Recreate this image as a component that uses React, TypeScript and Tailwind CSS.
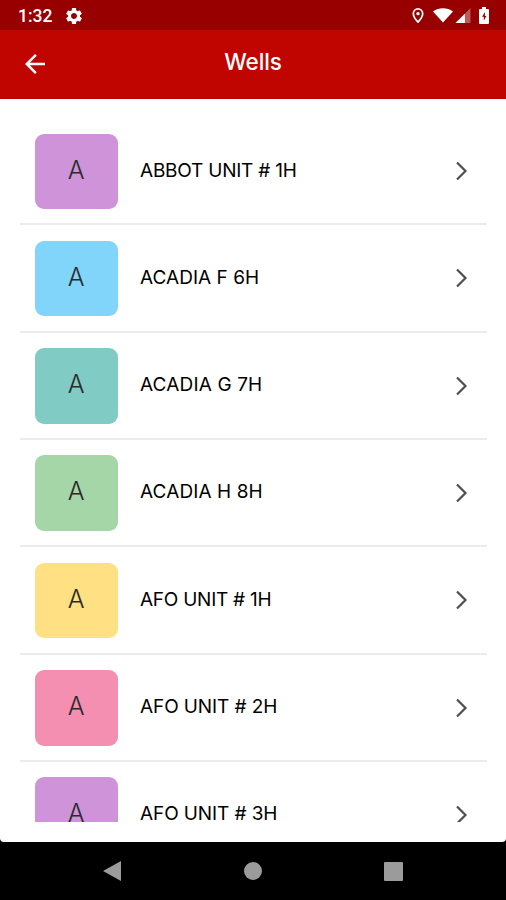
import { MdArrowBack, MdSettings } from "react-icons/md";

const wells = [
  { name: "ABBOT UNIT # 1H", color: "bg-[#ce93d8]", tracking: "tracking-[-0.22px]" },
  { name: "ACADIA F 6H", color: "bg-[#81d4fa]", tracking: "tracking-[0.03px]" },
  { name: "ACADIA G 7H", color: "bg-[#80cbc4]", tracking: "tracking-[0.15px]" },
  { name: "ACADIA H 8H", color: "bg-[#a5d6a7]", tracking: "tracking-[0.1px]" },
  { name: "AFO UNIT # 1H", color: "bg-[#ffe082]", tracking: "tracking-[-0.25px]" },
  { name: "AFO UNIT # 2H", color: "bg-[#f48fb1]", tracking: "tracking-[-0.1px]" },
  { name: "AFO UNIT # 3H", color: "bg-[#ce93d8]", tracking: "tracking-[-0.1px]" },
];

function StatusBar() {
  return (
    <div className="flex h-[30px] shrink-0 items-center bg-[#980000] pr-[17px] pl-[18px] text-white">
      <span className="w-[35px] pt-[3px] font-[Roboto,sans-serif] text-[17.5px] leading-none font-medium">
        1:32
      </span>
      <MdSettings className="mt-px ml-[11px] size-[20px]" />
      <svg className="mt-px ml-auto h-[15px] w-[12px]" viewBox="0 0 12 16">
        <path
          d="M6 1a5 5 0 0 0-5 5c0 3.500 5 9 5 9s5-5.500 5-9a5 5 0 0 0-5-5Z"
          fill="none"
          stroke="currentColor"
          strokeWidth="1.800"
        />
        <circle cx="6" cy="6" r="1.800" fill="currentColor" />
      </svg>
      <svg className="ml-[9px] h-[16px] w-[20px]" viewBox="0 0 20 16" fill="currentColor">
        <path d="M0 4.500C6 .2 14 .2 20 4.500L10 15.500Z" />
      </svg>
      <svg className="mt-px ml-[2px] h-[15px] w-[16px]" viewBox="0 0 16 16" fill="currentColor">
        <path d="M16 0v16H0Z" opacity=".35" />
        <path d="M10 6v10H0Z" />
      </svg>
      <svg className="ml-[8px] h-[17px] w-[10px]" viewBox="0 0 10 17">
        <path d="M3 0h4v2h2a1 1 0 0 1 1 1v13a1 1 0 0 1-1 1H1a1 1 0 0 1-1-1V3a1 1 0 0 1 1-1h2Z" fill="currentColor" />
        <path d="M6 5 3 9.800h1.800v4L7.300 9H5.800Z" fill="#980000" />
      </svg>
    </div>
  );
}

function Header() {
  return (
    <header className="grid h-[68.5px] shrink-0 grid-cols-[1fr_auto_1fr] items-center bg-[#c00500] text-white">
      <MdArrowBack className="ml-[20px] size-[30px]" />
      <h1 className="pb-[4px] text-[22.5px] font-medium tracking-[-0.1px]">Wells</h1>
    </header>
  );
}

function WellRow({ name, color, tracking }: { name: string; color: string; tracking: string }) {
  return (
    <li className="flex h-[107.3px] shrink-0 items-start border-b-2 border-[#ebebeb] pt-[15.5px] pr-[19px] pl-[15px]">
      <span
        className={`flex h-[75.5px] w-[82.5px] items-center justify-center rounded-[9px] pb-[2px] text-[25px] font-light text-[#2b2b2b] ${color}`}
      >
        A
      </span>
      <span className={`ml-[22.5px] flex h-[74.5px] items-center text-[19px] whitespace-pre text-black ${tracking}`}>
        {name}
      </span>
      <svg className="mt-[27.5px] ml-auto h-[20px] w-[13px]" viewBox="0 0 13 20" fill="none">
        <path d="M2 1.500 10.500 10 2 18.500" stroke="#505050" strokeWidth="2.200" />
      </svg>
    </li>
  );
}

function NavigationBar() {
  return (
    <nav className="flex h-[58px] shrink-0 items-center justify-between bg-black pr-[103px] pl-[102px] text-[#9b9b9b]">
      <svg className="size-[20px]" viewBox="0 0 20 20" fill="currentColor">
        <path d="M19 0v20L1 10Z" />
      </svg>
      <span className="size-[18px] rounded-full bg-current" />
      <span className="size-[19px] rounded-[1px] bg-current" />
    </nav>
  );
}

export default function App() {
  return (
    <div className="flex h-[900px] w-[506px] flex-col overflow-hidden bg-black font-[Inter,sans-serif]">
      <StatusBar />
      <Header />
      <main className="flex h-[743.5px] flex-col rounded-b-[4px] bg-white pt-[19.6px] pr-[19px] pb-[20px] pl-[20px]">
        <ul className="flex flex-1 flex-col overflow-hidden">
          {wells.map((well) => (
            <WellRow key={well.name} {...well} />
          ))}
        </ul>
      </main>
      <NavigationBar />
    </div>
  );
}
